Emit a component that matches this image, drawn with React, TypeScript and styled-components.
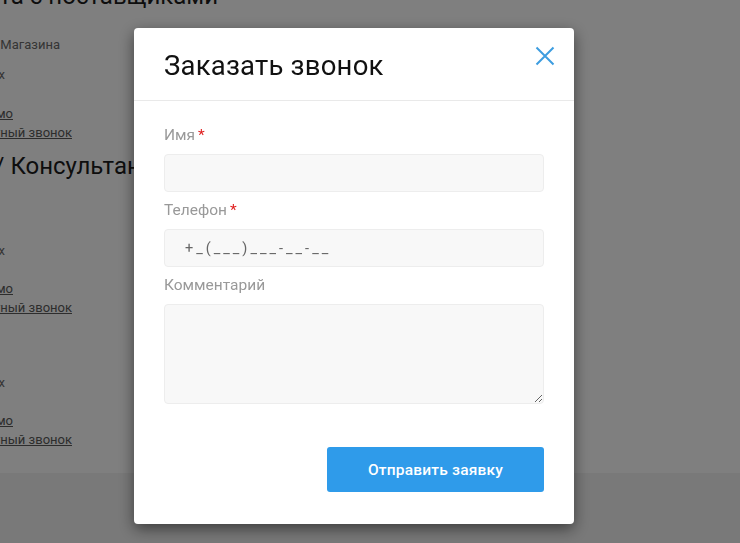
import React from "react";
import styled, { createGlobalStyle } from "styled-components";

const Global = createGlobalStyle`
  html, body { margin: 0; padding: 0; background: #fff; }
  body { font-family: Roboto, "Noto Sans", Arial, sans-serif; overflow: hidden; }
  * { box-sizing: border-box; }
`;

const Page = styled.div`
  min-height: 100vh;
  display: flex;
  flex-direction: column;
  background: #fff;
`;

const Content = styled.main`
  height: 473px;
  display: flex;
  flex-direction: column;
  overflow: hidden;
`;

const Footer = styled.footer`
  flex: 1;
  background: #f3f3f3;
`;

type Kind = "head" | "text" | "link";

const Line = styled.div<{ $end: number; $mt: number; $kind: Kind }>`
  width: ${(p) => p.$end}px;
  margin-top: ${(p) => p.$mt}px;
  display: flex;
  justify-content: flex-end;
  white-space: nowrap;
  flex-shrink: 0;
  font-size: ${(p) => (p.$kind === "head" ? "24px" : "13px")};
  line-height: ${(p) => (p.$kind === "head" ? "30px" : p.$kind === "link" ? "18px" : "20px")};
  color: ${(p) => (p.$kind === "head" ? "#1c1c1c" : p.$kind === "link" ? "#5a5a5a" : "#6a6a6a")};
`;

const BgLink = styled.a`
  color: inherit;
  text-decoration: underline;
`;

const Overlay = styled.div`
  position: fixed;
  inset: 0;
  background: rgba(0, 0, 0, 0.5);
  display: flex;
  align-items: flex-start;
  padding: 28px 0 0 134px;
`;

const Modal = styled.div`
  width: 440px;
  background: #fff;
  border-radius: 4px;
  box-shadow: 0 5px 15px rgba(0, 0, 0, 0.5);
  display: flex;
  flex-direction: column;
`;

const Header = styled.div`
  height: 73px;
  padding: 0 16px 0 30px;
  display: flex;
  align-items: center;
  justify-content: space-between;
  border-bottom: 1px solid #e9e9e9;
`;

const Title = styled.h2`
  margin: 3px 0 0;
  font-size: 27.5px;
  font-weight: 400;
  color: #111;
  letter-spacing: 0.2px;
`;

const Close = styled.button`
  width: 26px;
  height: 26px;
  padding: 0;
  border: 0;
  background: none;
  display: flex;
  align-items: center;
  justify-content: center;
  margin-top: -16px;
  cursor: pointer;
`;

const Form = styled.form`
  padding: 24px 30px 32px;
  display: flex;
  flex-direction: column;
`;

const Label = styled.label<{ $first?: boolean }>`
  display: block;
  margin-top: ${(p) => (p.$first ? "0" : "8px")};
  margin-bottom: 9px;
  font-size: 15.5px;
  line-height: 20px;
  color: #999;
`;

const Star = styled.span`
  color: #e02020;
  margin-left: 3px;
`;

const Input = styled.input`
  width: 380px;
  height: 38px;
  border: 1px solid #ededed;
  border-radius: 4px;
  background: #f8f8f8;
  padding: 0 20px;
  font-family: inherit;
  font-size: 14.5px;
  color: #555;
  outline: none;
  &::placeholder {
    color: #666;
    letter-spacing: 3px;
  }
`;

const Textarea = styled.textarea`
  width: 380px;
  height: 100px;
  border: 1px solid #ededed;
  border-radius: 4px;
  background: #f8f8f8;
  padding: 10px 20px;
  font-family: inherit;
  font-size: 14px;
  outline: none;
  resize: vertical;
`;

const Actions = styled.div`
  margin-top: 43px;
  display: flex;
  justify-content: flex-end;
`;

const Submit = styled.button`
  width: 217px;
  height: 45px;
  border: 0;
  border-radius: 3px;
  background: #2f9bea;
  color: #fff;
  font-family: inherit;
  font-size: 15.5px;
  font-weight: 500;
  letter-spacing: 0.2px;
  cursor: pointer;
`;

const bgLines: { kind: Kind; text: string; end: number; mt: number }[] = [
  { kind: "head", text: "Работа с поставщиками", end: 218, mt: -19 },
  { kind: "text", text: "Контакты Магазина", end: 60, mt: 24 },
  { kind: "text", text: "Без выходных", end: 5, mt: 10 },
  { kind: "link", text: "Написать письмо", end: 13, mt: 20 },
  { kind: "link", text: "Обратный звонок", end: 72, mt: 1 },
  { kind: "head", text: "Поддержка / Консультанты", end: 171, mt: 9 },
  { kind: "text", text: "Без выходных", end: 5, mt: 60 },
  { kind: "link", text: "Написать письмо", end: 13, mt: 19 },
  { kind: "link", text: "Обратный звонок", end: 72, mt: 1 },
  { kind: "text", text: "Без выходных", end: 5, mt: 56 },
  { kind: "link", text: "Написать письмо", end: 13, mt: 19 },
  { kind: "link", text: "Обратный звонок", end: 72, mt: 1 },
];

export default function App() {
  return (
    <>
      <Global />
      <Page>
        <Content>
          {bgLines.map((l, i) => (
            <Line key={i} $kind={l.kind} $end={l.end} $mt={l.mt}>
              {l.kind === "link" ? <BgLink href="#">{l.text}</BgLink> : l.text}
            </Line>
          ))}
        </Content>
        <Footer />
      </Page>
      <Overlay>
        <Modal role="dialog" aria-label="Заказать звонок">
          <Header>
            <Title>Заказать звонок</Title>
            <Close type="button" aria-label="Закрыть">
              <svg width="20" height="20" viewBox="0 0 20 20">
                <path d="M1.5 1.5 L18.5 18.5 M18.5 1.5 L1.5 18.5" stroke="#3d9de0" strokeWidth="2" fill="none" />
              </svg>
            </Close>
          </Header>
          <Form onSubmit={(e) => e.preventDefault()}>
            <Label $first>
              Имя<Star>*</Star>
            </Label>
            <Input type="text" />
            <Label>
              Телефон<Star>*</Star>
            </Label>
            <Input type="tel" placeholder="+_(___)___-__-__" />
            <Label>Комментарий</Label>
            <Textarea />
            <Actions>
              <Submit type="submit">Отправить заявку</Submit>
            </Actions>
          </Form>
        </Modal>
      </Overlay>
    </>
  );
}
